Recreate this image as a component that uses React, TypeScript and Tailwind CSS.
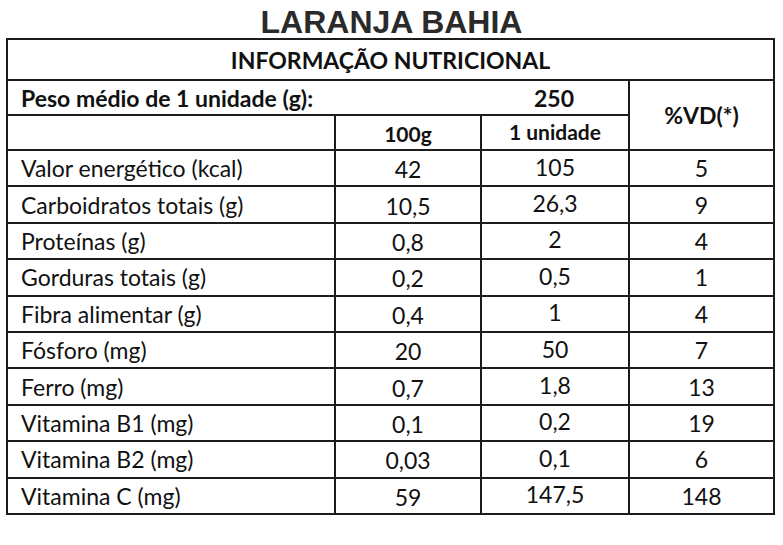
import React from "react";

const rows = [
  { label: "Valor energético (kcal)", g100: "42", unit: "105", vd: "5" },
  { label: "Carboidratos totais (g)", g100: "10,5", unit: "26,3", vd: "9" },
  { label: "Proteínas (g)", g100: "0,8", unit: "2", vd: "4" },
  { label: "Gorduras totais (g)", g100: "0,2", unit: "0,5", vd: "1" },
  { label: "Fibra alimentar (g)", g100: "0,4", unit: "1", vd: "4" },
  { label: "Fósforo (mg)", g100: "20", unit: "50", vd: "7" },
  { label: "Ferro (mg)", g100: "0,7", unit: "1,8", vd: "13" },
  { label: "Vitamina B1 (mg)", g100: "0,1", unit: "0,2", vd: "19" },
  { label: "Vitamina B2 (mg)", g100: "0,03", unit: "0,1", vd: "6" },
  { label: "Vitamina C (mg)", g100: "59", unit: "147,5", vd: "148" },
];

export default function App() {
  return (
    <main className="min-h-[545px] w-[783px] bg-white text-[#111]">
      <h1 className="pt-[6px] h-[38px] text-center text-[32px] leading-[32px] font-bold text-[#2a2a2a] [font-family:'Liberation_Sans',Arial,sans-serif]">
        LARANJA BAHIA
      </h1>

      <table className="ml-[6px] w-[769px] table-fixed border-collapse text-[23px] leading-[24px] [font-family:Lato,'Open_Sans',sans-serif]">
        <colgroup>
          <col className="w-[328px]" />
          <col className="w-[146px]" />
          <col className="w-[148px]" />
          <col className="w-[145px]" />
        </colgroup>
        <tbody>
          <tr className="h-[41px]">
            <th colSpan={4} className="border-2 border-[#1c1c1c] p-0 text-center font-bold">
              INFORMAÇÃO NUTRICIONAL
            </th>
          </tr>
          <tr className="h-[35px]">
            <td colSpan={3} className="border-2 border-[#1c1c1c] p-0 font-bold">
              <div className="flex items-center">
                <span className="flex-1 pl-[13px]">Peso médio de 1 unidade (g):</span>
                <span className="w-[148px] text-center">250</span>
              </div>
            </td>
            <td rowSpan={2} className="border-2 border-[#1c1c1c] p-0 text-center font-bold">
              %VD(*)
            </td>
          </tr>
          <tr className="h-[35px]">
            <td className="border-2 border-[#1c1c1c] p-0"></td>
            <td className="border-2 border-[#1c1c1c] p-0 pt-[3px] text-center text-[21px] font-bold">100g</td>
            <td className="border-2 border-[#1c1c1c] p-0 pb-[2px] text-center text-[21px] font-bold">1 unidade</td>
          </tr>
          {rows.map((r) => (
            <tr key={r.label} className="h-[36.4px]">
              <td className="border-2 border-[#1c1c1c] p-0 pl-[13px]">{r.label}</td>
              <td className="border-2 border-[#1c1c1c] p-0 pt-[2px] text-center">{r.g100}</td>
              <td className="border-2 border-[#1c1c1c] p-0 pb-[3px] text-center">{r.unit}</td>
              <td className="border-2 border-[#1c1c1c] p-0 text-center">{r.vd}</td>
            </tr>
          ))}
        </tbody>
      </table>
    </main>
  );
}
